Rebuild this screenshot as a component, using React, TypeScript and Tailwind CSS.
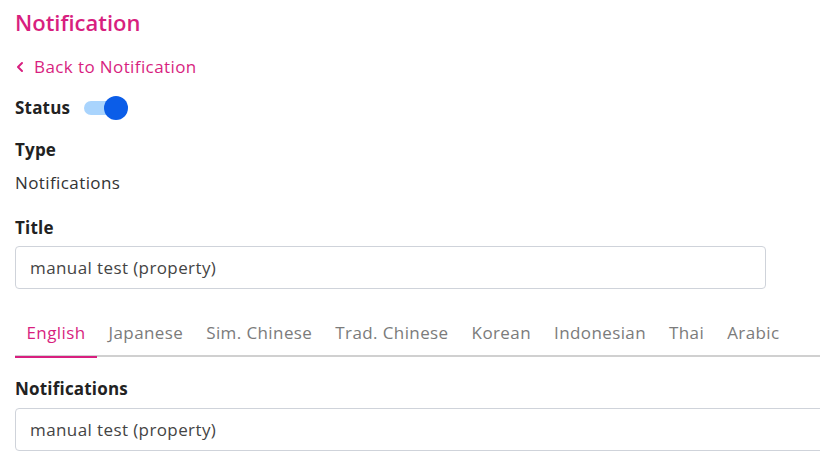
import { ChevronLeft } from 'lucide-react'

const tabs = ['English', 'Japanese', 'Sim. Chinese', 'Trad. Chinese', 'Korean', 'Indonesian', 'Thai', 'Arabic']

export default function App() {
  const active = 'English'

  return (
    <div
      className="w-[820px] h-[461px] overflow-hidden bg-white px-[15px] text-[17px] tracking-[0.4px] text-[#333]"
      style={{ fontFamily: '"Open Sans", "Noto Sans", sans-serif' }}
    >
      <h1 className="mt-[7px] text-[22px] leading-[30px] tracking-normal font-semibold text-[#d81f7f]">Notification</h1>

      <a href="#" className="mt-[18px] -ml-[3px] flex items-center gap-[6px] leading-[24px] text-[#d81f7f]">
        <ChevronLeft size={16} strokeWidth={3} />
        <span>Back to Notification</span>
      </a>

      {/* status */}
      <div className="mt-[17px] flex h-[24px] items-center gap-[14px]">
        <span className="font-bold tracking-[0.2px] text-[#222]">Status</span>
        <div className="relative h-[24px] w-[44px]">
          <div className="absolute left-0 top-[5px] h-[14px] w-[34px] rounded-full bg-[#a9d4fd]" />
          <div className="absolute right-0 top-0 h-[24px] w-[24px] rounded-full bg-[#0b5de8]" />
        </div>
      </div>

      <div className="mt-[18px] leading-[24px] font-bold tracking-[0.2px] text-[#222]">Type</div>
      <div className="mt-[9px] leading-[24px]">Notifications</div>

      <div className="mt-[21px] leading-[24px] font-bold tracking-[0.2px] text-[#222]">Title</div>
      <div className="mt-[6px] flex h-[43px] w-[751px] items-center rounded-[4px] border border-[#cfd3da] px-[14px] text-[#444]">
        manual test (property)
      </div>

      {/* language tabs */}
      <div className="mt-[20px] flex w-[820px] border-b-2 border-[#d0d0d0]">
        {tabs.map((t) => (
          <div
            key={t}
            className={`-mb-[3px] px-[11.5px] pt-[12px] pb-[11px] leading-[24px] ${
              t === active ? 'border-b-[2px] border-[#d81f7f] text-[#d81f7f]' : 'border-b-[2px] border-transparent text-[#7b7b7b]'
            }`}
          >
            {t}
          </div>
        ))}
      </div>

      <div className="mt-[20px] leading-[24px] font-bold tracking-[0.2px] text-[#222]">Notifications</div>
      <div className="mt-[7px] flex h-[43px] w-[830px] items-center rounded-[4px] border border-[#cfd3da] px-[14px] text-[#444]">
        manual test (property)
      </div>
    </div>
  )
}
